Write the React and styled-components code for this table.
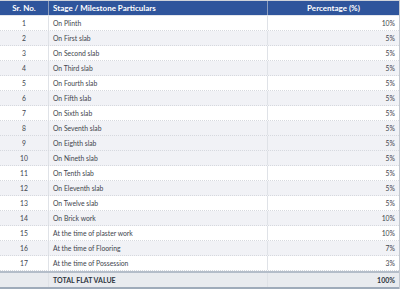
import React from "react";
import styled, { createGlobalStyle } from "styled-components";

const GlobalStyle = createGlobalStyle`
  body {
    margin: 0;
    background: #ffffff;
    font-family: Lato, "Open Sans", sans-serif;
  }
`;

const rows = [
  ["1", "On Plinth", "10%"],
  ["2", "On First slab", "5%"],
  ["3", "On Second slab", "5%"],
  ["4", "On Third slab", "5%"],
  ["5", "On Fourth slab", "5%"],
  ["6", "On Fifth slab", "5%"],
  ["7", "On Sixth slab", "5%"],
  ["8", "On Seventh slab", "5%"],
  ["9", "On Eighth slab", "5%"],
  ["10", "On Nineth slab", "5%"],
  ["11", "On Tenth slab", "5%"],
  ["12", "On Eleventh slab", "5%"],
  ["13", "On Twelve slab", "5%"],
  ["14", "On Brick work", "10%"],
  ["15", "At the time of plaster work", "10%"],
  ["16", "At the time of Flooring", "7%"],
  ["17", "At the time of Possession", "3%"],
];

// rows that show the light grey band in the screenshot
const shaded = ["2", "4", "6", "8", "9", "10", "12", "14", "16"];

const Table = styled.div`
  width: 400px;
  border-top: 1px solid #cfd3da;
  border-right: 1px solid #c3c8d0;
  box-sizing: border-box;
`;

const Row = styled.div`
  display: grid;
  grid-template-columns: 49px 219px 1fr;
  height: 15px;
  box-sizing: border-box;
  background: ${(p) => (p.$shaded ? "#f1f2f6" : "#ffffff")};
  border-bottom: 1px dotted #d6d9df;
`;

const HeadRow = styled(Row)`
  background: #2f559c;
  border-bottom: 1px solid #e3e6ec;
`;

const TotalRow = styled(Row)`
  background: #e9ebef;
  border-top: 2px solid #b4bdc9;
  border-bottom: 2px solid #9fabba;
  height: 18px;
`;

const Cell = styled.div`
  display: flex;
  align-items: center;
  justify-content: ${(p) =>
    p.$align === "right" ? "flex-end" : p.$align === "center" ? "center" : "flex-start"};
  padding: 0 4px;
  font-size: 6.8px;
  color: #41454d;
  border-right: ${(p) => (p.$last ? "none" : "1px solid #dfe2e7")};
  white-space: nowrap;
  overflow: hidden;
`;

const HeadCell = styled(Cell)`
  color: #ffffff;
  font-weight: 700;
  font-size: 8px;
  border-right: ${(p) => (p.$last ? "none" : "1px solid #8c9dbd")};
`;

const TotalCell = styled(Cell)`
  font-weight: 700;
  font-size: 7px;
  color: #2f3640;
`;

export default function App() {
  return (
    <>
      <GlobalStyle />
      <Table>
        <HeadRow>
          <HeadCell $align="center">Sr. No.</HeadCell>
          <HeadCell>Stage / Milestone Particulars</HeadCell>
          <HeadCell $align="center" $last>
            Percentage (%)
          </HeadCell>
        </HeadRow>
        {rows.map(([no, stage, pct]) => (
          <Row key={no} $shaded={shaded.includes(no)}>
            <Cell $align="center">{no}</Cell>
            <Cell>{stage}</Cell>
            <Cell $align="right" $last>
              {pct}
            </Cell>
          </Row>
        ))}
        <TotalRow>
          <TotalCell />
          <TotalCell>TOTAL FLAT VALUE</TotalCell>
          <TotalCell $align="right" $last>
            100%
          </TotalCell>
        </TotalRow>
      </Table>
    </>
  );
}
